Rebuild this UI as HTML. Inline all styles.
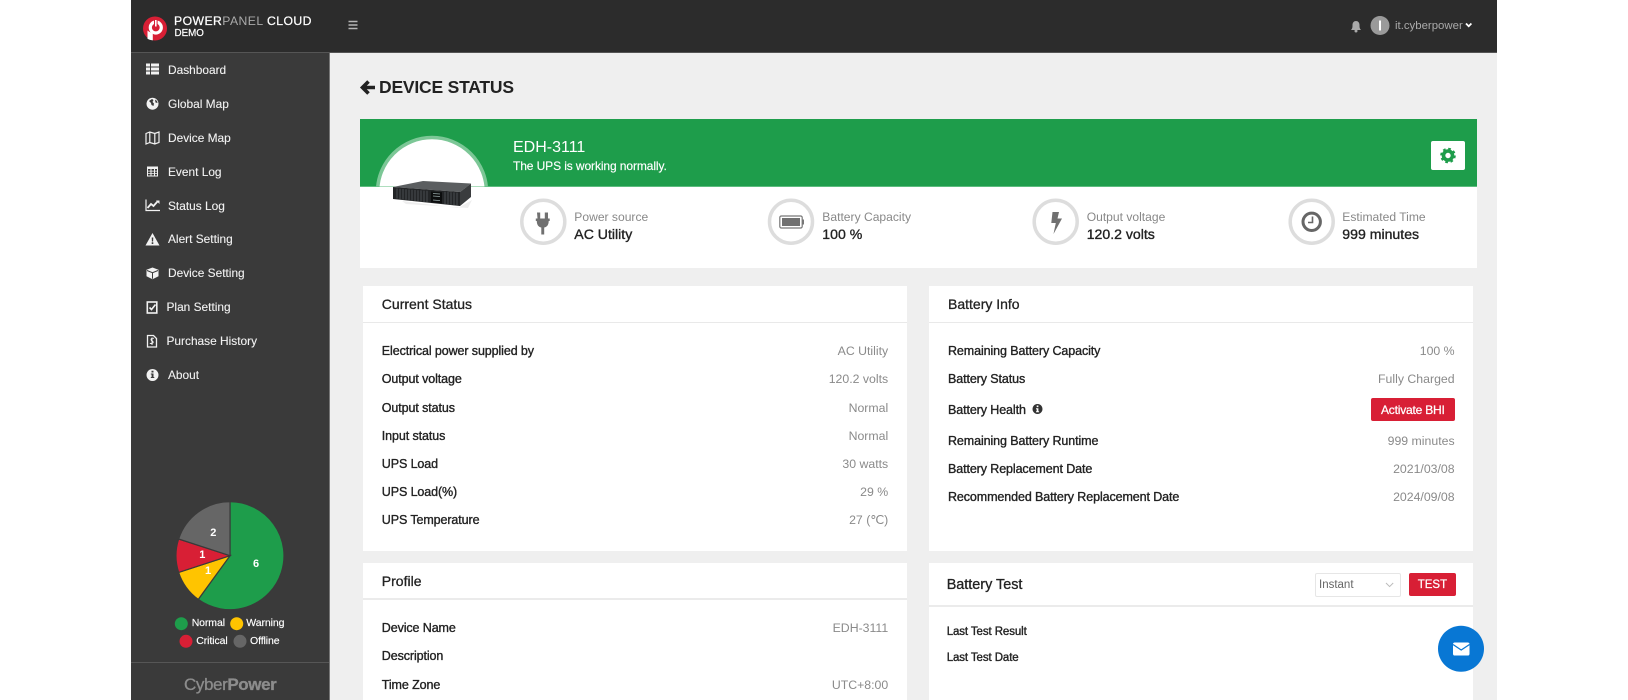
<!DOCTYPE html>
<html><head><meta charset="utf-8"><title>Device Status</title>
<style>
html,body{margin:0;padding:0;width:1628px;height:700px;overflow:hidden;background:#fff;font-family:"Liberation Sans",Arial,sans-serif}
.b{position:absolute}
.t{position:absolute;white-space:nowrap;line-height:20px;height:20px}
.n{color:#f2f2f2;font-size:11.900px;left:168px;-webkit-text-stroke:.1px #f2f2f2}
.l{color:#222;font-size:12.500px;letter-spacing:-.1px;-webkit-text-stroke:.35px #222}
.v{color:#8a8a8a;font-size:12.300px;text-align:right}
.h{color:#222;font-size:14px;-webkit-text-stroke:.3px #222}
.sl{color:#888;font-size:12.100px}
.sv{color:#222;font-size:14.100px;-webkit-text-stroke:.35px #222}
.lg{color:#fff;font-size:10.500px;letter-spacing:-.1px;-webkit-text-stroke:.15px #fff}
.pn{color:#fff;font-size:11px;font-weight:bold;width:20px;text-align:center;margin-left:-10px}
</style></head><body>
<div class="b" style="left:131px;top:0;width:1366px;height:700px;background:#efefef"></div>
<div class="b" style="left:131px;top:0;width:1366px;height:53px;background:#2c2c2c;box-shadow:inset 0 -1px 0 #555"></div>
<div class="b" style="left:131px;top:53px;width:198px;height:647px;background:#3a3a3a;border-right:1px solid #777;box-sizing:content-box"></div>
<div class="b" style="left:131px;top:662px;width:198px;height:1px;background:#565656"></div>

<div class="b" style="left:360px;top:119px;width:1117px;height:67.500px;background:#1e9d4b;box-shadow:inset 0 -1px 0 #5cbc7e"></div>
<div class="b" style="left:360px;top:186.500px;width:1117px;height:81.500px;background:#fff"></div>
<div class="b" style="left:363px;top:286px;width:544px;height:265px;background:#fff"></div>
<div class="b" style="left:363px;top:322px;width:544px;height:1px;background:#e9e9e9"></div>
<div class="b" style="left:363px;top:563px;width:544px;height:137px;background:#fff"></div>
<div class="b" style="left:363px;top:598px;width:544px;height:2px;background:#ebebeb"></div>
<div class="b" style="left:929px;top:286px;width:544px;height:265px;background:#fff"></div>
<div class="b" style="left:929px;top:322px;width:544px;height:1px;background:#e9e9e9"></div>
<div class="b" style="left:929px;top:563px;width:544px;height:137px;background:#fff"></div>
<div class="b" style="left:929px;top:605px;width:544px;height:2px;background:#ebebeb"></div>

<svg class="b" style="left:0;top:0" width="1628" height="700" viewBox="0 0 1628 700" xmlns="http://www.w3.org/2000/svg">
<!-- logo -->
<circle cx="155" cy="28.500" r="12" fill="#d81f35"/>
<circle cx="155.800" cy="27.500" r="5.500" fill="none" stroke="#fff" stroke-width="3.200"/>
<path d="M147.500 30.500v8.300c1.600.9 3.400 1.500 5.300 1.600v-7.500c-2-.2-3.600-1-5.300-2.400z" fill="#fff"/>
<rect x="154" y="18.500" width="3.600" height="8.500" fill="#d81f35"/>
<rect x="155" y="20" width="1.600" height="6.500" fill="#fff"/>
<!-- hamburger -->
<path d="M348.500 21.500h9M348.500 25h9M348.500 28.500h9" stroke="#b5b5b5" stroke-width="1.600"/>
<!-- bell -->
<path d="M1351 30c1.500-1.500 1.500-3 1.500-5 0-2.500 1.500-4 3.500-4s3.500 1.500 3.500 4c0 2 0 3.500 1.500 5z" fill="#aaa"/><circle cx="1356" cy="31" r="1.500" fill="#aaa"/>
<!-- avatar -->
<circle cx="1380" cy="25.500" r="9.500" fill="#9a9a9a"/>
<rect x="1379" y="20.500" width="2" height="10" fill="#fff"/>
<path d="M1466 23.500l2.700 2.700 2.700-2.700" fill="none" stroke="#fff" stroke-width="1.800"/>
<!-- sidebar icons -->
<g fill="#f2f2f2">
<path d="M146 64h4v3h-4zM151 64h8v3h-8zM146 68h4v3h-4zM151 68h8v3h-8zM146 72h4v3h-4zM151 72h8v3h-8z" transform="translate(0 -.5)"/>
<path fill-rule="evenodd" d="M152.500 97.700a6 6 0 1 0 .01 0zM149 101l3-2 1.500 1-1 2 1.500 1.500-.5 2.500-2-1-.5-2zM155 99.500l2 1.500.500 2-2-.5z"/>
<path d="M146 133.500l3.800-1.500 5 1.500 4.200-1.500v10.500l-4.200 1.500-5-1.500-3.800 1.500z M149.800 132v10.500M154.800 133.500V144" fill="none" stroke="#f2f2f2" stroke-width="1.200"/>
<path fill-rule="evenodd" d="M147 166.500h11v10h-11zM148 169v1.700h2.500V169zM151.500 169v1.700h2.500V169zM155 169v1.700h2V169zM148 171.500v1.700h2.500v-1.700zM151.500 171.500v1.700h2.500v-1.700zM155 171.500v1.700h2v-1.700zM148 174v1.500h2.500V174zM151.500 174v1.500h2.500V174zM155 174v1.500h2V174z"/>
<path d="M146 199.500v11h14" fill="none" stroke="#f2f2f2" stroke-width="1.200"/>
<path d="M147.500 208l3.500-4 2.500 2 4-4.500" fill="none" stroke="#f2f2f2" stroke-width="1.800"/>
<path d="M159.500 200.500v3.500l-3.500-3.500z"/>
<path fill-rule="evenodd" d="M152.500 233l7 12.500h-14zM151.700 237.500l.2 4h1.200l.2-4zM151.700 242.300v1.700h1.600v-1.700z"/>
<path d="M152.500 267.500l6 2.200v6.500l-6 3-6-3v-6.500z"/>
<path d="M147 270.500l5.500 2.200 5.500-2.200M152.500 272.700v6" fill="none" stroke="#3a3a3a" stroke-width="1"/>
<rect x="147.300" y="302" width="9.500" height="11" fill="none" stroke="#f2f2f2" stroke-width="1.600"/>
<path d="M149.500 307.500l2 2 4-5" fill="none" stroke="#f2f2f2" stroke-width="1.600"/>
<path d="M147.500 335.500h6l3 3v8.500h-9z" fill="none" stroke="#f2f2f2" stroke-width="1.300"/>
<path d="M153.800 338.500c-2.500-1.200-3.800 1.500-1.700 2.500s1 3.200-2.300 2.300M152 337.500v7.500" fill="none" stroke="#f2f2f2" stroke-width="1"/>
<path fill-rule="evenodd" d="M152.500 369a6 6 0 1 0 .01 0zM151.500 370.800h2v1.700h-2zM150.800 373.500h2.700v3.500h.800v1h-3.500v-1h.800v-2.500h-.800z"/>
</g>
<!-- pie -->
<g stroke="#3a3a3a" stroke-width="1.200">
<path d="M230 555.700L230 501.700A54 54 0 1 1 198.260 599.400Z" fill="#1e9d4b"/>
<path d="M230 555.700L198.260 599.400A54 54 0 0 1 178.640 572.400Z" fill="#ffc400"/>
<path d="M230 555.700L178.640 572.400A54 54 0 0 1 178.640 539Z" fill="#d81f35"/>
<path d="M230 555.700L178.640 539A54 54 0 0 1 230 501.700Z" fill="#666"/>
</g>
<circle cx="181.300" cy="623.700" r="6.500" fill="#1e9d4b"/>
<circle cx="236.700" cy="623.700" r="6.500" fill="#ffc400"/>
<circle cx="186" cy="641.300" r="6.500" fill="#d81f35"/>
<circle cx="240" cy="641.300" r="6.500" fill="#666"/>
<!-- back arrow -->
<path d="M375 87.500h-10M368.500 81.500l-6 6 6 6" fill="none" stroke="#222" stroke-width="3.600"/>
<!-- hero circle -->
<clipPath id="gc"><rect x="360" y="119" width="200" height="67.500"/></clipPath>
<circle cx="432" cy="192" r="54.500" fill="#fff" stroke="#7cc796" stroke-width="3.500" clip-path="url(#gc)"/>
<!-- UPS -->
<path d="M402 201l56 7 14-8-4 8-62-4z" fill="#ddd" opacity=".5"/>
<path d="M393 187l30-6 48 2.500-11 8.500z" fill="#5b5e60"/>
<path d="M393 187l67 5v14l-67-7z" fill="#232527"/>
<path d="M460 192l11-8.500v13.500l-11 9z" fill="#3a3c3e"/>
<path d="M397 188.500v10M400 188.800v10.500M403 189v10.500M406 189.300v10.500M409 189.500v10.700M412 189.700v11M415 190v11M418 190.200v11M421 190.400v11.200M424 190.600v11.400M427 190.800v11.400M445 191.800v12.200M448 192v12.300M451 192.200v12.500M454 192.400v12.800M457 192.600v13" stroke="#4a4d50" stroke-width="1"/>
<path d="M431 191.500l11 .8v11l-11-1z" fill="#0c0d0e"/>
<path d="M433 193.500l7 .5M433 196l7 .5M433 200l7 .6" stroke="#9aa" stroke-width=".8"/>
<!-- gear button -->
<rect x="1431" y="141" width="34" height="29" rx="2" fill="#fff"/>
<circle cx="1448" cy="155.500" r="4.500" fill="none" stroke="#1e9d4b" stroke-width="3.600"/>
<circle cx="1448" cy="155.500" r="6.600" fill="none" stroke="#1e9d4b" stroke-width="2.400" stroke-dasharray="2.600 2.584"/>
<!-- stat circles -->
<g fill="none" stroke="#ddd" stroke-width="3.500">
<circle cx="543.300" cy="221.700" r="21.500"/><circle cx="791" cy="221.700" r="21.500"/><circle cx="1055.700" cy="221.700" r="21.500"/><circle cx="1311.700" cy="221.700" r="21.500"/>
</g>
<!-- plug -->
<path d="M537 212.500h3.200v6h4.600v-6h3.200v6h1.700v2.500h-1c0 4-1.800 6-4.500 6.500v7h-2.900v-7c-2.700-.5-4.500-2.500-4.500-6.500h-1v-2.500h1.700z" fill="#707070"/>
<!-- battery -->
<rect x="779.800" y="216" width="22.400" height="12" rx="1.500" fill="none" stroke="#777" stroke-width="1.200"/>
<rect x="782" y="218" width="18" height="8" fill="#707070"/>
<rect x="802.500" y="219.500" width="1.500" height="5" fill="#777"/>
<!-- bolt -->
<path d="M1052.500 212h6.500l-1.500 6.500h4.500l-8.500 15.500 2.300-11h-4.500z" fill="#707070"/>
<!-- clock -->
<circle cx="1311.700" cy="221.800" r="8.700" fill="none" stroke="#666" stroke-width="3"/>
<path d="M1312.500 216.500v6h-4.500" fill="none" stroke="#666" stroke-width="1.600"/>
<!-- info -->
<path fill-rule="evenodd" d="M1037.500 404a5 5 0 1 0 .01 0zM1036.700 405.500h1.700v1.600h-1.700zM1036 408.200h2.400v3h.7v1H1036v-1h.7v-2h-.7z" fill="#333"/>
<!-- select chevron -->
<path d="M1386 583l3.600 3.600 3.600-3.600" fill="none" stroke="#bbb" stroke-width="1"/>
<!-- mail -->
<circle cx="1461" cy="648.700" r="23" fill="#0877d4"/>
<rect x="1453" y="642.500" width="16.500" height="13" rx="1.800" fill="#fff"/>
<path d="M1453 644.500l8.200 5.500 8.300-5.500" fill="none" stroke="#0877d4" stroke-width="1.200"/>
</svg>

<div class="t" style="left:174px;top:11px;font-size:12.200px;letter-spacing:.45px;color:#fff;-webkit-text-stroke:.25px #fff">POWER<span style="color:#aaa;-webkit-text-stroke:0">PANEL</span> CLOUD</div>
<div class="t" style="left:174.500px;top:24px;font-size:9.800px;color:#fff;-webkit-text-stroke:.2px #fff">DEMO</div>
<div class="t" style="left:1395px;top:15.500px;font-size:11.400px;color:#aaa">it.cyberpower</div>

<div class="t n" style="top:60px">Dashboard</div>
<div class="t n" style="top:94px">Global Map</div>
<div class="t n" style="top:128px">Device Map</div>
<div class="t n" style="top:161.500px">Event Log</div>
<div class="t n" style="top:195.500px">Status Log</div>
<div class="t n" style="top:229px">Alert Setting</div>
<div class="t n" style="top:263px">Device Setting</div>
<div class="t n" style="top:297px;left:166.500px">Plan Setting</div>
<div class="t n" style="top:331px;left:166.500px">Purchase History</div>
<div class="t n" style="top:365px">About</div>

<div class="t pn" style="left:256px;top:554px">6</div>
<div class="t pn" style="left:208px;top:561px">1</div>
<div class="t pn" style="left:202.300px;top:545px">1</div>
<div class="t pn" style="left:213.300px;top:523px">2</div>
<div class="t lg" style="left:191.700px;top:613px">Normal</div>
<div class="t lg" style="left:246.300px;top:613px">Warning</div>
<div class="t lg" style="left:196.300px;top:631px">Critical</div>
<div class="t lg" style="left:250px;top:631px">Offline</div>
<div class="t" style="left:184px;top:675px;font-size:17px;color:#8c8c8c;letter-spacing:-.4px;-webkit-text-stroke:.3px #8c8c8c">Cyber<span style="font-weight:bold">Power</span></div>

<div class="t" style="left:379px;top:76.500px;font-size:17.500px;font-weight:bold;color:#222;letter-spacing:-.2px">DEVICE STATUS</div>
<div class="t" style="left:513px;top:138px;font-size:16px;color:#fff">EDH-3111</div>
<div class="t" style="left:513px;top:156px;font-size:12px;color:#fff;letter-spacing:-.1px;-webkit-text-stroke:.15px #fff">The UPS is working normally.</div>

<div class="t sl" style="left:574.300px;top:206.700px">Power source</div>
<div class="t sv" style="left:574.300px;top:223.500px">AC Utility</div>
<div class="t sl" style="left:822.300px;top:206.700px">Battery Capacity</div>
<div class="t sv" style="left:822.300px;top:223.500px">100 %</div>
<div class="t sl" style="left:1086.700px;top:206.700px">Output voltage</div>
<div class="t sv" style="left:1086.700px;top:223.500px">120.2 volts</div>
<div class="t sl" style="left:1342.300px;top:206.700px">Estimated Time</div>
<div class="t sv" style="left:1342.300px;top:223.500px">999 minutes</div>

<div class="t h" style="left:381.800px;top:294px">Current Status</div>
<div class="t l" style="left:381.800px;top:341px">Electrical power supplied by</div><div class="t v" style="right:739.800px;top:341px">AC Utility</div>
<div class="t l" style="left:381.800px;top:369.300px">Output voltage</div><div class="t v" style="right:739.800px;top:369.300px">120.2 volts</div>
<div class="t l" style="left:381.800px;top:397.600px">Output status</div><div class="t v" style="right:739.800px;top:397.600px">Normal</div>
<div class="t l" style="left:381.800px;top:425.600px">Input status</div><div class="t v" style="right:739.800px;top:425.600px">Normal</div>
<div class="t l" style="left:381.800px;top:453.700px">UPS Load</div><div class="t v" style="right:739.800px;top:453.700px">30 watts</div>
<div class="t l" style="left:381.800px;top:482px">UPS Load(%)</div><div class="t v" style="right:739.800px;top:482px">29 %</div>
<div class="t l" style="left:381.800px;top:510px">UPS Temperature</div><div class="t v" style="right:739.800px;top:510px">27 (℃)</div>

<div class="t h" style="left:381.800px;top:571px">Profile</div>
<div class="t l" style="left:381.800px;top:618px">Device Name</div><div class="t v" style="right:739.800px;top:618px">EDH-3111</div>
<div class="t l" style="left:381.800px;top:646.300px">Description</div>
<div class="t l" style="left:381.800px;top:674.600px">Time Zone</div><div class="t v" style="right:739.800px;top:674.600px">UTC+8:00</div>

<div class="t h" style="left:948px;top:294px">Battery Info</div>
<div class="t l" style="left:948px;top:341px">Remaining Battery Capacity</div><div class="t v" style="right:173.400px;top:341px">100 %</div>
<div class="t l" style="left:948px;top:369.300px">Battery Status</div><div class="t v" style="right:173.400px;top:369.300px">Fully Charged</div>
<div class="t l" style="left:948px;top:399.600px">Battery Health</div>
<div class="b" style="left:1371px;top:397.500px;width:83.600px;height:23.500px;background:#d81f35;border-radius:2px"></div>
<div class="t" style="left:1371px;width:83.600px;text-align:center;top:399.500px;font-size:12px;letter-spacing:-.2px;color:#fff;-webkit-text-stroke:.25px #fff">Activate BHI</div>
<div class="t l" style="left:948px;top:430.600px">Remaining Battery Runtime</div><div class="t v" style="right:173.400px;top:430.600px">999 minutes</div>
<div class="t l" style="left:948px;top:459px">Battery Replacement Date</div><div class="t v" style="right:173.400px;top:459px">2021/03/08</div>
<div class="t l" style="left:948px;top:487px">Recommended Battery Replacement Date</div><div class="t v" style="right:173.400px;top:487px">2024/09/08</div>

<div class="t h" style="left:946.700px;top:575px;font-size:14.400px">Battery Test</div>
<div class="b" style="left:1315.400px;top:572.500px;width:85.300px;height:24px;border:1px solid #e6e6e6;box-sizing:border-box;border-radius:2px"></div>
<div class="t" style="left:1319px;top:574.500px;font-size:11.500px;color:#666">Instant</div>
<div class="b" style="left:1408.900px;top:572.500px;width:47.100px;height:23.500px;background:#d81f35;border-radius:2px"></div>
<div class="t" style="left:1408.900px;width:47.100px;text-align:center;top:574.500px;font-size:11.500px;color:#fff;-webkit-text-stroke:.25px #fff">TEST</div>
<div class="t l" style="left:946.700px;top:621.500px;font-size:11.500px">Last Test Result</div>
<div class="t l" style="left:946.700px;top:648px;font-size:11.500px">Last Test Date</div>
</body></html>
